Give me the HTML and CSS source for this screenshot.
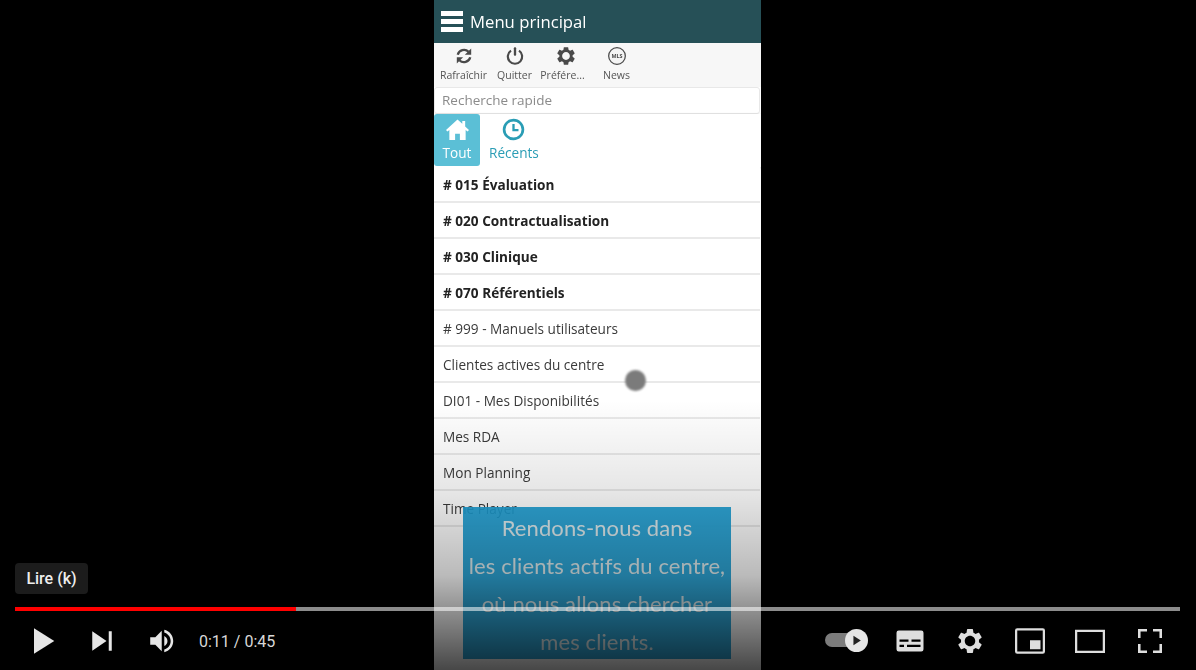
FILE: index.html
```html
<!DOCTYPE html>
<html lang="fr">
<head>
  <meta charset="UTF-8" />
  <title>Menu principal</title>
  <link rel="stylesheet" href="styles.css">
</head>
<body>
  <div class="player">

    <div class="phone">
      <header class="app-bar">
        <div class="burger"><span></span><span></span><span></span></div>
        <h1>Menu principal</h1>
      </header>

      <nav class="toolbar">
        <div class="tool">
          <svg viewBox="0 0 24 24" class="tool-icon"><path d="M4.5 10.5a7.8 7.8 0 0 1 13-3.6" fill="none" stroke="#4a4a4a" stroke-width="2.8"/><path d="M20.6 3v7.6H13z" fill="#4a4a4a"/><path d="M19.5 13.5a7.8 7.8 0 0 1-13 3.6" fill="none" stroke="#4a4a4a" stroke-width="2.8"/><path d="M3.4 21v-7.6H11z" fill="#4a4a4a"/></svg>
          <span>Rafraîchir</span>
        </div>
        <div class="tool">
          <svg viewBox="0 0 24 24" class="tool-icon"><path d="M7.2 5.6a8.6 8.6 0 1 0 9.600 0" fill="none" stroke="#4a4a4a" stroke-width="2.6"/><rect x="10.600" y="1.600" width="2.800" height="10" rx="1.200" fill="#4a4a4a"/></svg>
          <span>Quitter</span>
        </div>
        <div class="tool">
          <svg viewBox="9 9 18 18" class="tool-icon"><path fill="#4a4a4a" fill-rule="evenodd" d="m 23.94,18.78 c .03,-0.25 .05,-0.51 .05,-0.78 0,-0.27 -0.02,-0.52 -0.05,-0.78 l 1.68,-1.32 c .15,-0.12 .19,-0.33 .09,-0.51 l -1.6,-2.76 c -0.09,-0.17 -0.31,-0.24 -0.48,-0.17 l -1.99,.8 c -0.41,-0.32 -0.86,-0.58 -1.35,-0.78 l -0.30,-2.12 c -0.02,-0.19 -0.19,-0.33 -0.39,-0.33 l -3.2,0 c -0.2,0 -0.36,.14 -0.39,.33 l -0.30,2.12 c -0.48,.2 -0.93,.47 -1.35,.78 l -1.99,-0.8 c -0.18,-0.07 -0.39,0 -0.48,.17 l -1.6,2.76 c -0.10,.17 -0.05,.39 .09,.51 l 1.68,1.32 c -0.03,.25 -0.05,.52 -0.05,.78 0,.26 .02,.52 .05,.78 l -1.68,1.32 c -0.15,.12 -0.19,.33 -0.09,.51 l 1.6,2.76 c .09,.17 .31,.24 .48,.17 l 1.99,-0.8 c .41,.32 .86,.58 1.35,.78 l .30,2.12 c .02,.19 .19,.33 .39,.33 l 3.2,0 c .2,0 .36,-0.14 .39,-0.33 l .30,-2.12 c .48,-0.2 .93,-0.47 1.35,-0.78 l 1.99,.8 c .18,.07 .39,0 .48,-0.17 l 1.6,-2.76 c .09,-0.17 .05,-0.39 -0.09,-0.51 l -1.68,-1.32 z M 18,21.5 c -1.93,0 -3.5,-1.57 -3.5,-3.5 0,-1.93 1.57,-3.5 3.5,-3.5 1.93,0 3.5,1.57 3.5,3.5 0,1.93 -1.57,3.5 -3.5,3.5 z"/></svg>
          <span class="tool-cut">Préfére...</span>
        </div>
        <div class="tool">
          <svg viewBox="0 0 24 24" class="tool-icon"><circle cx="12" cy="12" r="10" fill="#f4f4f4" stroke="#4a4a4a" stroke-width="1.5"/><text x="12" y="14.4" text-anchor="middle" class="mls">MLS</text></svg>
          <span>News</span>
        </div>
      </nav>

      <input class="search" type="text" placeholder="Recherche rapide">

      <div class="tabs">
        <div class="tab active">
          <svg viewBox="0 0 24 24" class="tab-icon"><path fill="#fff" d="M12 1.500 0 12.600l1.500 1.600 2-1.800V23h6v-6.500h5V23h6V12.400l2 1.800 1.500-1.600-4-3.700V3h-3v3.100z"/></svg>
          <span>Tout</span>
        </div>
        <div class="tab">
          <svg viewBox="0 0 24 24" class="tab-icon"><circle cx="12" cy="12" r="9.800" fill="none" stroke="#2a9db5" stroke-width="2.800"/><path d="M12 6.200v6.400h5.200" fill="none" stroke="#2a9db5" stroke-width="2.400"/></svg>
          <span>Récents</span>
        </div>
      </div>

      <ul class="menu">
        <li class="strong"># 015 Évaluation</li>
        <li class="strong"># 020 Contractualisation</li>
        <li class="strong"># 030 Clinique</li>
        <li class="strong"># 070 Référentiels</li>
        <li># 999 - Manuels utilisateurs</li>
        <li>Clientes actives du centre</li>
        <li>DI01 - Mes Disponibilités</li>
        <li>Mes RDA</li>
        <li>Mon Planning</li>
        <li>Time Player</li>
      </ul>
    </div>

    <div class="tap-dot"></div>

    <div class="caption">
      <p>Rendons-nous dans</p>
      <p>les clients actifs du centre,</p>
      <p>où nous allons chercher</p>
      <p>mes clients.</p>
    </div>

    <div class="shade"></div>

    <div class="tooltip">Lire (k)</div>

    <div class="chrome">
      <div class="progress"><div class="progress-played"></div></div>
      <div class="controls">
        <div class="controls-left">
          <button class="ctl"><svg viewBox="0 0 36 36"><path d="M12 26.500 25.500 18 12 9.500z"/></svg></button>
          <button class="ctl"><svg viewBox="0 0 36 36"><path d="M11.500 24.500 21 18l-9.500-6.500zM22.500 11.500v13h2v-13z"/></svg></button>
          <button class="ctl ctl-volume"><svg viewBox="0 0 36 36"><path d="M8,21 L12,21 L17,26 L17,10 L12,15 L8,15 L8,21 Z M19,14 L19,22 C20.48,21.32 21.5,19.77 21.5,18 C21.5,16.26 20.48,14.74 19,14 ZM19,11.29 C21.89,12.15 24,14.83 24,18 C24,21.17 21.89,23.85 19,24.71 L19,26.77 C23.01,25.86 26,22.28 26,18 C26,13.72 23.01,10.14 19,9.23 L19,11.29 Z"/></svg></button>
          <span class="time">0:11 / 0:45</span>
        </div>
        <div class="controls-right">
          <div class="autoplay">
            <div class="autoplay-track"></div>
            <div class="autoplay-knob"><svg viewBox="0 0 12 12"><path d="M3.200 1.600v8.800L10 6z"/></svg></div>
          </div>
          <button class="ctl"><svg viewBox="0 0 36 36"><path fill-rule="evenodd" d="M10.500 11h15a1.500 1.500 0 0 1 1.500 1.500v11a1.500 1.500 0 0 1-1.500 1.500h-15A1.500 1.500 0 0 1 9 23.500v-11A1.500 1.500 0 0 1 10.500 11zM11 17v1.500h6V17zm8 0v1.500h6V17zm-8 3.500V22h3v-1.500zm5 0V22h9v-1.500z"/></svg></button>
          <button class="ctl"><svg viewBox="0 0 36 36"><path fill-rule="evenodd" d="m 23.94,18.78 c .03,-0.25 .05,-0.51 .05,-0.78 0,-0.27 -0.02,-0.52 -0.05,-0.78 l 1.68,-1.32 c .15,-0.12 .19,-0.33 .09,-0.51 l -1.6,-2.76 c -0.09,-0.17 -0.31,-0.24 -0.48,-0.17 l -1.99,.8 c -0.41,-0.32 -0.86,-0.58 -1.35,-0.78 l -0.30,-2.12 c -0.02,-0.19 -0.19,-0.33 -0.39,-0.33 l -3.2,0 c -0.2,0 -0.36,.14 -0.39,.33 l -0.30,2.12 c -0.48,.2 -0.93,.47 -1.35,.78 l -1.99,-0.8 c -0.18,-0.07 -0.39,0 -0.48,.17 l -1.6,2.76 c -0.10,.17 -0.05,.39 .09,.51 l 1.68,1.32 c -0.03,.25 -0.05,.52 -0.05,.78 0,.26 .02,.52 .05,.78 l -1.68,1.32 c -0.15,.12 -0.19,.33 -0.09,.51 l 1.6,2.76 c .09,.17 .31,.24 .48,.17 l 1.99,-0.8 c .41,.32 .86,.58 1.35,.78 l .30,2.12 c .02,.19 .19,.33 .39,.33 l 3.2,0 c .2,0 .36,-0.14 .39,-0.33 l .30,-2.12 c .48,-0.2 .93,-0.47 1.35,-0.78 l 1.99,.8 c .18,.07 .39,0 .48,-0.17 l 1.6,-2.76 c .09,-0.17 .05,-0.39 -0.09,-0.51 l -1.68,-1.32 z M 18,21.5 c -1.93,0 -3.5,-1.57 -3.5,-3.5 0,-1.93 1.57,-3.5 3.5,-3.5 1.93,0 3.5,1.57 3.5,3.5 0,1.93 -1.57,3.5 -3.5,3.5 z"/></svg></button>
          <button class="ctl"><svg viewBox="0 0 36 36"><path fill-rule="evenodd" d="M9.500 9.500h17a1.500 1.500 0 0 1 1.500 1.500v14a1.500 1.500 0 0 1-1.500 1.500h-17A1.500 1.500 0 0 1 8 25V11a1.500 1.500 0 0 1 1.500-1.500zM9.500 11v14h17V11zM18 17.500h7v6h-7z"/></svg></button>
          <button class="ctl"><svg viewBox="0 0 36 36"><path fill-rule="evenodd" d="M8 10.500h20V26H8zM9.500 12v12.500h17V12z"/></svg></button>
          <button class="ctl"><svg viewBox="0 0 36 36"><path d="M10 16h1.700v-4.300H16V10h-6zM20 10v1.700h4.300V16H26v-6zM24.300 24.300H20V26h6v-6h-1.700zM11.700 20H10v6h6v-1.700h-4.300z"/></svg></button>
        </div>
      </div>
    </div>

  </div>
</body>
</html>
```

FILE: styles.css
```css
* {
  box-sizing: border-box;
}

html, body {
  margin: 0;
  height: 100%;
  background: #000;
  overflow: hidden;
}

.player {
  position: relative;
  width: 1196px;
  height: 670px;
  background: #000;
  overflow: hidden;
}

/* phone recording */
.phone {
  width: 327px;
  height: 670px;
  margin-left: 434px;
  background: #fff;
  font-family: "Open Sans", sans-serif;
  color: #3a3a3a;
  filter: blur(0.35px);
}

.app-bar {
  height: 43px;
  background: #265057;
  display: flex;
  align-items: center;
  padding-left: 7px;
  gap: 7px;
}

.app-bar h1 {
  margin: 0;
  font-size: 16.7px;
  font-weight: 400;
  color: #fff;
}

.burger {
  width: 22px;
  display: flex;
  flex-direction: column;
  gap: 3px;
}

.burger span {
  height: 5px;
  background: #fff;
}

.toolbar {
  height: 44px;
  background: #f7f7f7;
  display: flex;
  padding-left: 4px;
}

.tool {
  width: 51px;
  display: flex;
  flex-direction: column;
  align-items: center;
  padding-top: 3px;
  gap: 2px;
  font-size: 10.5px;
  line-height: 14px;
  color: #555;
  white-space: nowrap;
}

.tool-cut {
  margin-right: 6px;
}

.tool-icon {
  width: 20px;
  height: 20px;
}

.mls {
  font-family: "Open Sans", sans-serif;
  font-size: 6.5px;
  font-weight: 700;
  fill: #4a4a4a;
}

.search {
  display: block;
  width: 326px;
  height: 27px;
  border: 1px solid #e8e8e8;
  border-radius: 3px;
  background: #fff;
  padding: 0 7px 2px;
  font-family: "Open Sans", sans-serif;
  font-size: 13.5px;
  outline: none;
}

.search::placeholder {
  color: #8b8b8b;
  opacity: 1;
}

.tabs {
  height: 53px;
  display: flex;
  gap: 9px;
  background: #fff;
  box-shadow: 0 1px 3px rgba(0, 0, 0, 0.2);
}

.tab {
  display: flex;
  flex-direction: column;
  align-items: center;
  padding-top: 4px;
  gap: 3px;
  height: 52px;
  font-size: 13.6px;
  line-height: 18px;
  color: #2a9db5;
}

.tab.active {
  width: 46px;
  background: #5bbfd6;
  border-radius: 3px;
  color: #fff;
}

.tab-icon {
  width: 23px;
  height: 23px;
}

.menu {
  list-style: none;
  margin: 0;
  padding: 0;
}

.menu li {
  width: 326px;
  height: 36px;
  display: flex;
  align-items: center;
  padding-left: 9px;
  font-size: 13.6px;
  background: #fff;
  border-bottom: 2px solid #e9e9e9;
}

.menu li.strong {
  font-weight: 700;
  color: #222;
}

.tap-dot {
  position: absolute;
  left: 625px;
  top: 370px;
  width: 21px;
  height: 21px;
  border-radius: 50%;
  background: #7b7b7b;
  filter: blur(0.8px);
}

.caption {
  position: absolute;
  left: 463px;
  top: 507px;
  width: 268px;
  height: 152px;
  background: rgba(28, 158, 212, 0.92);
  font-family: Lato, sans-serif;
  font-size: 22px;
  letter-spacing: 0.1px;
  line-height: 38px;
  padding-top: 2px;
  color: #dfecef;
  text-align: center;
  white-space: nowrap;
  filter: blur(0.3px);
}

.caption p {
  margin: 0;
}

/* youtube overlay */
.shade {
  position: absolute;
  left: 0;
  right: 0;
  bottom: 0;
  height: 270px;
  background: linear-gradient(to bottom, rgba(0, 0, 0, 0) 0%, rgba(0, 0, 0, 0.1) 35%, rgba(0, 0, 0, 0.27) 65%, rgba(0, 0, 0, 0.72) 100%);
}

.tooltip {
  position: absolute;
  left: 15px;
  top: 563px;
  height: 31px;
  width: 73px;
  background: #1c1c1c;
  border-radius: 4px;
  display: flex;
  align-items: center;
  justify-content: center;
  font-family: Roboto, sans-serif;
  font-size: 16px;
  font-weight: 500;
  color: #eee;
}

.chrome {
  position: absolute;
  left: 15px;
  top: 607px;
  width: 1165px;
}

.progress {
  height: 4px;
  background: rgba(255, 255, 255, 0.55);
}

.progress-played {
  width: 281px;
  height: 4px;
  background: #f00;
}

.controls {
  display: flex;
  justify-content: space-between;
  height: 54px;
  margin-top: 3px;
}

.controls-left,
.controls-right {
  display: flex;
  align-items: center;
}

.controls-left {
  margin-left: -2px;
}

.ctl {
  width: 59px;
  height: 54px;
  padding: 0;
  border: none;
  background: none;
  display: flex;
  align-items: center;
  justify-content: center;
}

.ctl-volume {
  margin-left: 2px;
}

.controls-right .ctl {
  width: 60px;
}

.ctl svg {
  width: 54px;
  height: 54px;
  fill: #e6e6e6;
}

.ctl-volume svg {
  width: 46px;
  height: 46px;
}

.controls-right .ctl svg {
  fill: #dedede;
}

.time {
  font-family: Roboto, sans-serif;
  font-size: 16px;
  color: #d8d8d8;
  margin-left: 7px;
}

.autoplay {
  position: relative;
  width: 43px;
  height: 24px;
  margin-right: 12px;
}

.autoplay-track {
  position: absolute;
  left: 0;
  top: 4px;
  width: 30px;
  height: 14px;
  border-radius: 7px;
  background: #7c7c7c;
}

.autoplay-knob {
  position: absolute;
  right: 0;
  top: 0;
  width: 23px;
  height: 23px;
  border-radius: 50%;
  background: #e6e6e6;
  display: flex;
  align-items: center;
  justify-content: center;
}

.autoplay-knob svg {
  width: 13px;
  height: 13px;
  fill: #222;
}
```
